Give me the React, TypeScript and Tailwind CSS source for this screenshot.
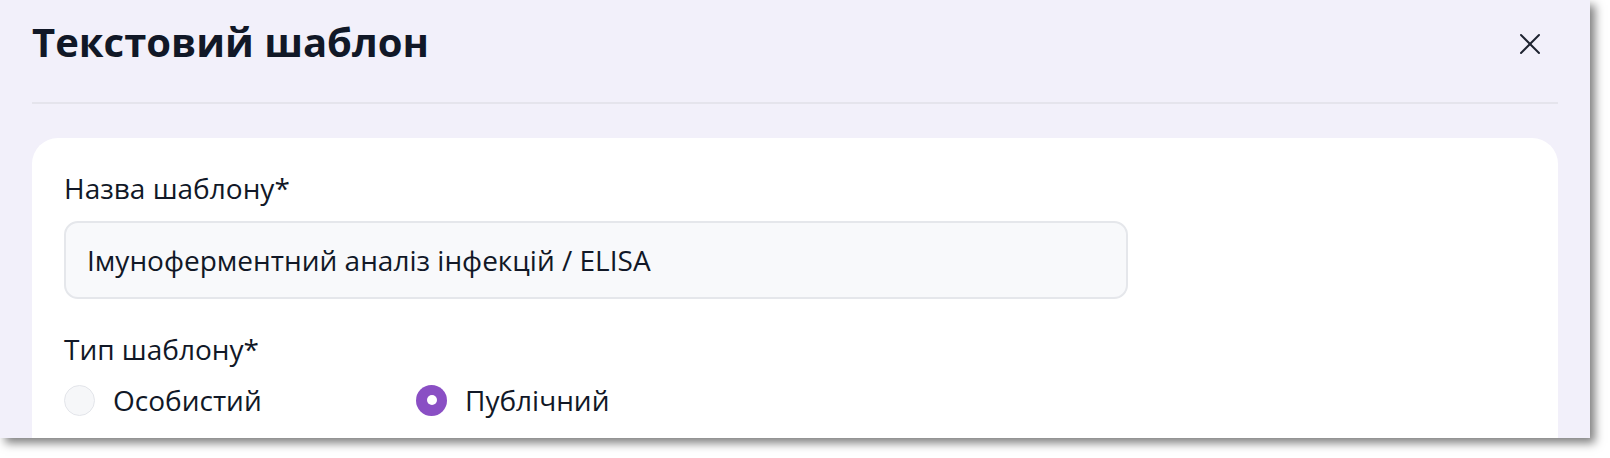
import { X } from 'lucide-react';

const font = { fontFamily: '"Open Sans", "Noto Sans", sans-serif' };

function Radio({ label, checked }: { label: string; checked?: boolean }) {
  return (
    <label className="flex w-[352px] items-center gap-[18px]">
      {checked ? (
        <span className="flex h-[31px] w-[31px] items-center justify-center rounded-full bg-[#8a4fc4]">
          <span className="h-[10px] w-[10px] rounded-full bg-white" />
        </span>
      ) : (
        <span className="h-[31px] w-[31px] rounded-full border border-[#e3e5ea] bg-[#f6f7f9]" />
      )}
      <span className="text-[28px] font-medium leading-8 text-[#111827]">{label}</span>
    </label>
  );
}

export default function App() {
  return (
    <div className="h-[458px] w-[1610px] overflow-hidden bg-white" style={font}>
      <div className="flex h-[438px] w-[1590px] flex-col bg-[#f2f0fa] shadow-[5px_5px_9px_rgba(0,0,0,0.5)]">
        <div className="mx-8 flex h-[104px] shrink-0 items-start justify-between border-b-2 border-[#e5e4ec]">
          <h1 className="pt-[18px] text-[40px] font-bold leading-[48px] text-[#111827]">
            Текстовий шаблон
          </h1>
          <button className="mr-[10px] mt-[26px] text-[#1f2430]">
            <X size={36} strokeWidth={1.3} />
          </button>
        </div>

        <div className="mx-8 mt-[34px] flex-1 rounded-t-[26px] bg-white px-8 pt-[34px]">
          <p className="text-[28px] font-medium leading-8 text-[#111827]">Назва шаблону*</p>
          <div className="mt-[17px] flex h-[78px] w-[1064px] items-center rounded-[14px] border-2 border-[#e5e7eb] bg-[#f8f9fb] px-[21px]">
            <span className="text-[28px] text-[#111827]">
              Імуноферментний аналіз інфекцій / ELISA
            </span>
          </div>

          <p className="mt-[34px] text-[28px] font-medium leading-8 text-[#111827]">Тип шаблону*</p>
          <div className="mt-[19px] flex">
            <Radio label="Особистий" />
            <Radio label="Публічний" checked />
          </div>
        </div>
      </div>
    </div>
  );
}
